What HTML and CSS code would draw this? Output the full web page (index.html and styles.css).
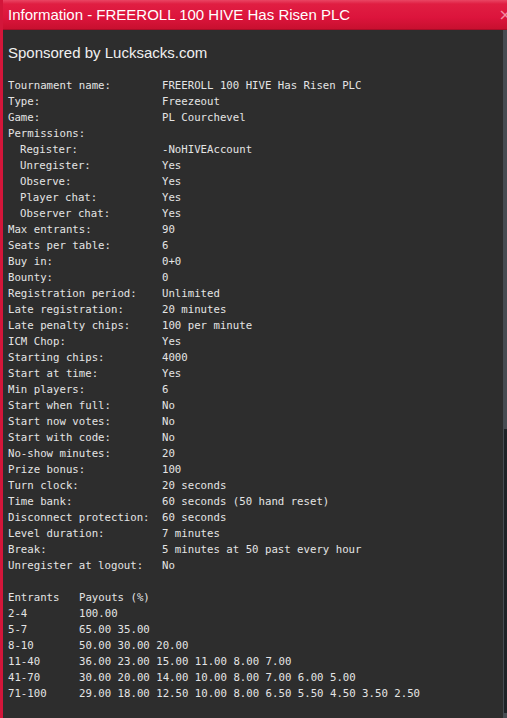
FILE: index.html
```html
<!DOCTYPE html>
<html>
<head>
<meta charset="utf-8">
<link rel="stylesheet" href="styles.css">
</head>
<body>
<div class="window">
  <div class="titlebar">
    <span class="title">Information - FREEROLL 100 HIVE Has Risen PLC</span>
    <span class="close">×</span>
  </div>
  <div class="content">
    <div class="sponsor">Sponsored by Lucksacks.com</div>
    <div class="info">
      <span>Tournament name:</span><span>FREEROLL 100 HIVE Has Risen PLC</span>
      <span>Type:</span><span>Freezeout</span>
      <span>Game:</span><span>PL Courchevel</span>
      <span>Permissions:</span><span></span>
      <span class="ind">Register:</span><span>-NoHIVEAccount</span>
      <span class="ind">Unregister:</span><span>Yes</span>
      <span class="ind">Observe:</span><span>Yes</span>
      <span class="ind">Player chat:</span><span>Yes</span>
      <span class="ind">Observer chat:</span><span>Yes</span>
      <span>Max entrants:</span><span>90</span>
      <span>Seats per table:</span><span>6</span>
      <span>Buy in:</span><span>0+0</span>
      <span>Bounty:</span><span>0</span>
      <span>Registration period:</span><span>Unlimited</span>
      <span>Late registration:</span><span>20 minutes</span>
      <span>Late penalty chips:</span><span>100 per minute</span>
      <span>ICM Chop:</span><span>Yes</span>
      <span>Starting chips:</span><span>4000</span>
      <span>Start at time:</span><span>Yes</span>
      <span>Min players:</span><span>6</span>
      <span>Start when full:</span><span>No</span>
      <span>Start now votes:</span><span>No</span>
      <span>Start with code:</span><span>No</span>
      <span>No-show minutes:</span><span>20</span>
      <span>Prize bonus:</span><span>100</span>
      <span>Turn clock:</span><span>20 seconds</span>
      <span>Time bank:</span><span>60 seconds (50 hand reset)</span>
      <span>Disconnect protection:</span><span>60 seconds</span>
      <span>Level duration:</span><span>7 minutes</span>
      <span>Break:</span><span>5 minutes at 50 past every hour</span>
      <span>Unregister at logout:</span><span>No</span>
    </div>
    <div class="payouts">
      <span>Entrants</span><span>Payouts (%)</span>
      <span>2-4</span><span>100.00</span>
      <span>5-7</span><span>65.00 35.00</span>
      <span>8-10</span><span>50.00 30.00 20.00</span>
      <span>11-40</span><span>36.00 23.00 15.00 11.00 8.00 7.00</span>
      <span>41-70</span><span>30.00 20.00 14.00 10.00 8.00 7.00 6.00 5.00</span>
      <span>71-100</span><span>29.00 18.00 12.50 10.00 8.00 6.50 5.50 4.50 3.50 2.50</span>
    </div>
  </div>
  <div class="scrolltrack"><div class="thumb"></div></div>
</div>
</body>
</html>
```

FILE: styles.css
```css
html, body {
  margin: 0;
  padding: 0;
  background: #2d2d2d;
}
.window {
  position: relative;
  width: 507px;
  height: 718px;
  overflow: hidden;
  background: #2d2d2d;
  border-left: 3px solid #d3163a;
  box-sizing: border-box;
}
.titlebar {
  position: relative;
  height: 30px;
  margin-left: -3px;
  padding-left: 8px;
  box-sizing: border-box;
  background: linear-gradient(#ea4563 0px, #e01e42 4px, #dc143c 60%, #c8102f 100%);
  border-top-left-radius: 4px;
  border-bottom: 1px solid #a80c28;
  display: flex;
  align-items: center;
}
.title {
  font-family: "Liberation Sans", Arial, sans-serif;
  font-size: 15px;
  color: #ffffff;
  padding-bottom: 1px;
}
.close {
  position: absolute;
  right: -5px;
  top: 5px;
  font-family: "DejaVu Sans", sans-serif;
  font-size: 16px;
  color: #f58aa0;
}
.content {
  padding: 13px 0 0 5px;
  color: #e4e4e4;
}
.sponsor {
  font-family: "Liberation Sans", Arial, sans-serif;
  font-size: 15px;
  color: #f0f0f0;
  line-height: 20px;
  margin-bottom: 15px;
}
.info, .payouts {
  display: grid;
  font-family: "DejaVu Sans Mono", monospace;
  font-size: 10.7px;
  line-height: 16px;
  white-space: pre;
}
.info {
  grid-template-columns: 154px auto;
}
.info .ind {
  padding-left: 12px;
}
.payouts {
  grid-template-columns: 71px auto;
  margin-top: 16px;
}
.scrolltrack {
  position: absolute;
  right: 0;
  top: 30px;
  bottom: 0;
  width: 4px;
  background: #464b51;
}
.thumb {
  position: absolute;
  right: 0;
  width: 3px;
  top: 399px;
  bottom: 5px;
  background: #1e2226;
}
```
